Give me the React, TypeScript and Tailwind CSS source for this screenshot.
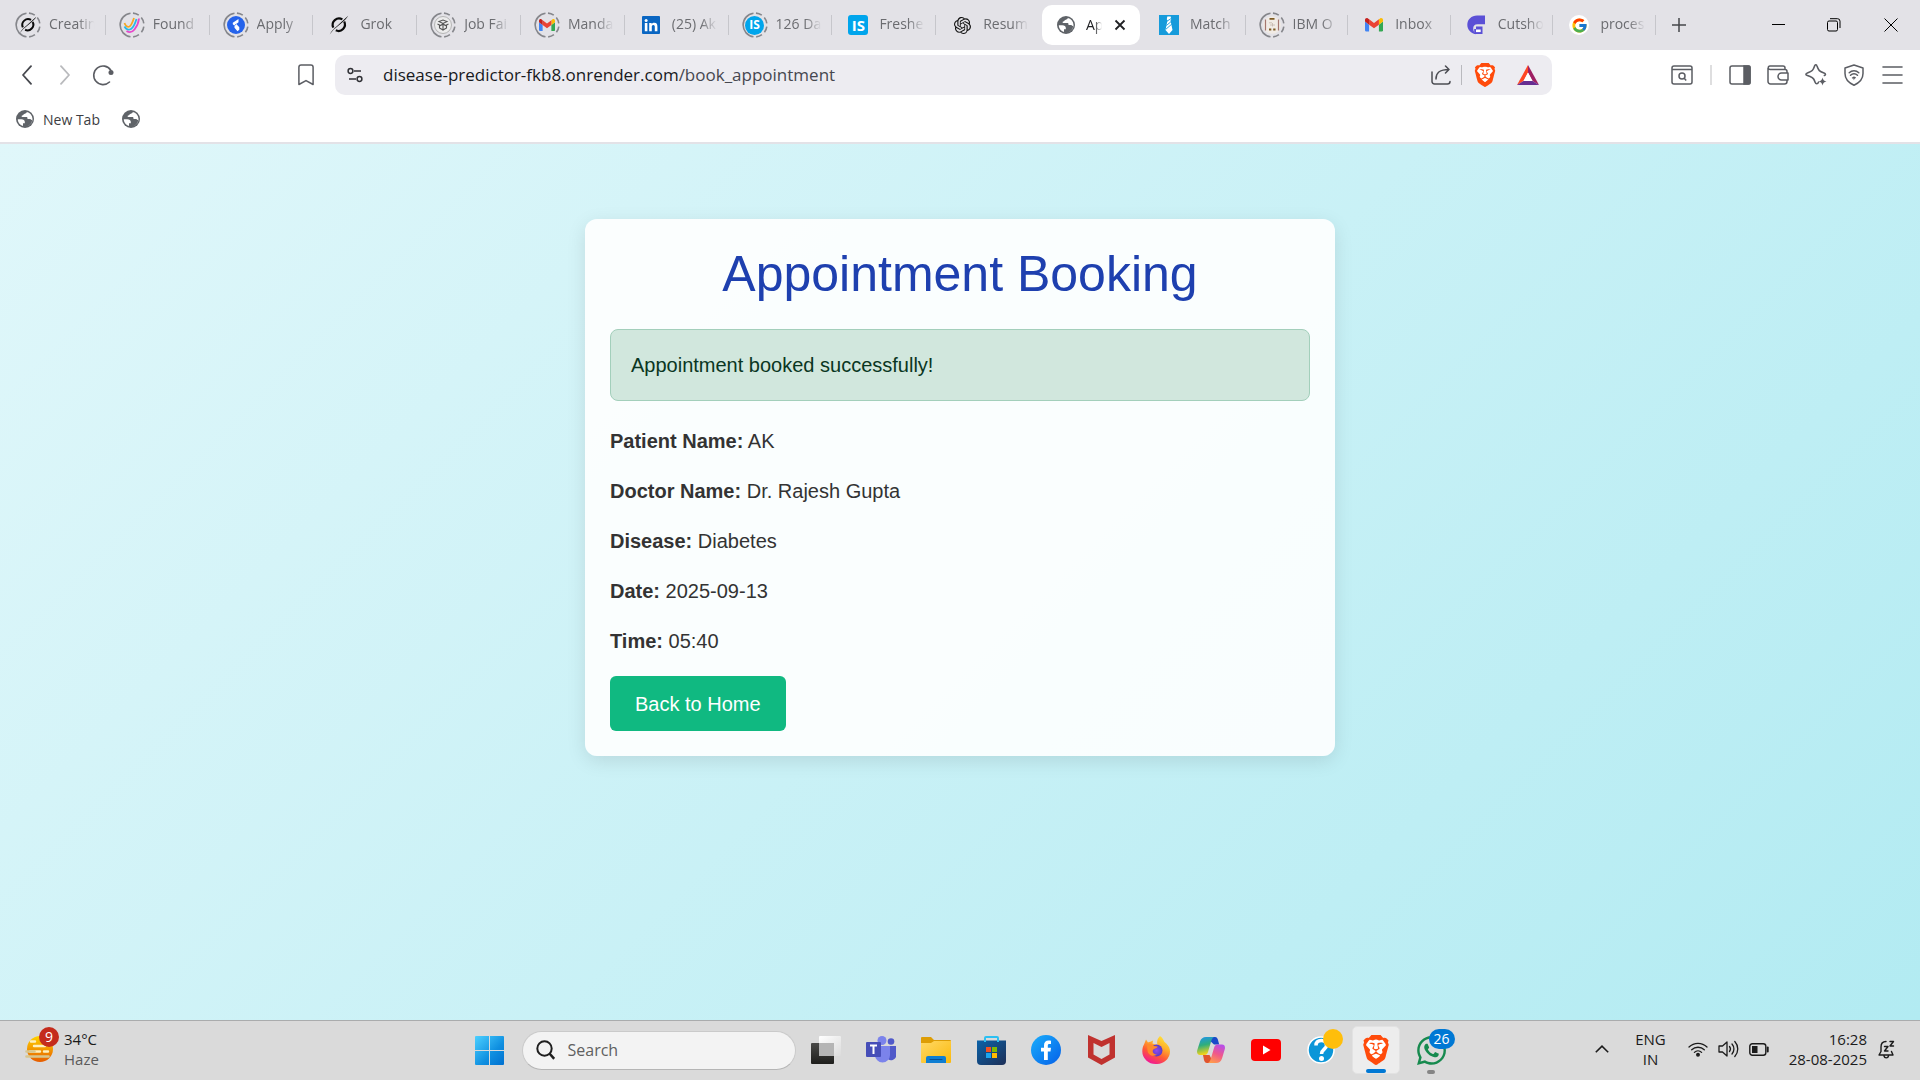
import type { ReactNode } from "react";
import { SiBrave, SiOpenai } from "react-icons/si";
import { FaWhatsapp } from "react-icons/fa";
import { FcGoogle } from "react-icons/fc";

function Globe({ size = 18 }: { size?: number }) {
  return (
    <svg width={size} height={size} viewBox="0 0 18 18">
      <circle cx="9" cy="9" r="9" fill="#5f6368" />
      <path d="M1.8 9.2h3.6c2 0 3.4 1 3.4 2.6v1.5H7v2.6C4 15.2 1.8 12.400 1.800 9.200z" fill="#fff" />
      <path d="M10.800 2.100C10.600 3.500 9.700 3.600 8.300 3.900 7.200 4.200 7.400 5.400 6.200 5.500 5.400 5.600 5.300 7 6.300 7.100h4.500c.6 0 .7.900.7 1.900h2.500c1 0 1.300 1.200 2.100 1.100 0 2.400-1.500 4.400-3.400 5.200l-1.200.6c2.900-.8 5.200-3.600 5-7.200C16.200 5.400 13.900 2.800 10.800 2.100z" fill="#fff" />
    </svg>
  );
}

function Gmail({ w = 18 }: { w?: number }) {
  return (
    <svg width={w} height={w * 0.76} viewBox="0 0 24 18">
      <path fill="#4285f4" d="M1.636 18h3.819V8.727L0 4.636v11.728C0 17.268.732 18 1.636 18" />
      <path fill="#34a853" d="M18.545 18h3.819A1.636 1.636 0 0 0 24 16.364V4.636l-5.455 4.091" />
      <path fill="#fbbc04" d="M18.545 1.636v7.091L24 4.636V2.455c0-2.023-2.31-3.178-3.927-1.964" />
      <path fill="#ea4335" d="M5.455 8.727V1.636L12 6.545l6.545-4.909v7.091L12 13.636" />
      <path fill="#c5221f" d="M0 2.455v2.181l5.455 4.091V1.636L3.927.491C2.309-.723 0 .432 0 2.455" />
    </svg>
  );
}

function Grok({ size = 20 }: { size?: number }) {
  return (
    <svg width={size} height={size} viewBox="0 0 20 20" fill="none" stroke="#0a0a0a">
      <path d="M15.200 6.600a6.400 6.400 0 0 1-8.400 8.700M4.300 12.600A6.400 6.400 0 0 1 13.400 4.400" strokeWidth="2.200" />
      <path d="M.8 19.200C3 15.500 4.500 14 7.500 11.500L19.200.8C17.500 4 15.500 5.300 13.200 7.500L4.500 14.800z" fill="#0a0a0a" stroke="none" />
    </svg>
  );
}

function Ring({ children }: { children: ReactNode }) {
  return (
    <span className="relative flex size-[26px] items-center justify-center">
      <svg className="absolute inset-0" width="26" height="26" viewBox="0 0 26 26" fill="none" stroke="#85868b" strokeWidth="1.600">
        <path d="M11.500 1.200A11.900 11.900 0 0 0 11.500 24.800" />
        <path d="M13.500 1.100A11.900 11.900 0 0 1 24.900 13v.3A11.900 11.900 0 0 1 13.500 24.900" strokeDasharray="6.200 3.400" strokeDashoffset="-.5" />
      </svg>
      {children}
    </span>
  );
}

function InternMark({ round }: { round?: boolean }) {
  return (
    <span
      className={
        round
          ? "flex size-[19px] items-center justify-center rounded-full bg-[#00a5ec] text-[12px] leading-none font-bold text-white"
          : "flex size-5 items-center justify-center rounded-[3px] bg-[#00a5ec] text-[15px] leading-none font-bold text-white"
      }
    >
      IS
    </span>
  );
}

function Swooshes() {
  return (
    <svg width="18" height="18" viewBox="0 0 18 18" fill="none" strokeWidth="1.800">
      <path d="M1.500 7c1 3 3 4.500 5 3.500S9.500 6.500 11 2" stroke="#f6a623" />
      <path d="M1.500 10.500c1.500 3 4 4 6.500 2.500s4-5 5.500-10" stroke="#28b8e8" />
      <path d="M3.500 15c3 2 6 1 8-1.500s4-6 4.500-11" stroke="#e748c9" />
    </svg>
  );
}

function ApplyMark() {
  return (
    <svg width="18" height="18" viewBox="0 0 18 18">
      <circle cx="9" cy="9" r="9" fill="#2563eb" />
      <path d="M11.500 3v3.200L9.300 8l3 3.200v2.600l-1.800 1.400-3-3.400V9.700L5.800 8.200V6.800z" fill="#fff" />
      <path d="M7.300 9.700 9.300 8" stroke="#2563eb" strokeWidth=".8" />
    </svg>
  );
}

function Medal() {
  return (
    <svg width="18" height="18" viewBox="0 0 18 18" fill="none" stroke="#555" strokeWidth="1.100">
      <circle cx="9" cy="9" r="8.500" fill="#ececec" stroke="#b5b5b5" strokeWidth="1" />
      <path d="M5 5.500 9 4l4 1.500L9 7.500zM3.500 8l3 1.500L9 8l2.500 1.500 3-1.500M9 8v6.500M5.500 9.500V12L9 14l3.500-2V9.500" />
    </svg>
  );
}

function LinkedIn() {
  return (
    <svg width="18" height="18" viewBox="0 0 18 18" fill="#fff">
      <rect width="18" height="18" rx="1" fill="#0a66c2" />
      <circle cx="4.100" cy="4.400" r="1.500" />
      <path d="M2.800 7h2.600v8.200H2.800zM7.200 7h2.500v1.200C10.200 7.300 11.200 6.800 12.300 6.800c2.500 0 3.100 1.600 3.100 3.900v4.500h-2.600v-4.200c0-1-.2-2-1.500-2s-1.500 1-1.500 2v4.200H7.200z" />
    </svg>
  );
}

function Tie() {
  return (
    <svg width="20" height="20" viewBox="0 0 20 20">
      <rect width="20" height="20" fill="#169bdb" />
      <path d="M8.300 1.500h3.400l.5 2.800-.7 1.200 2 9.500-3.500 4-3.500-4 2-9.500-.7-1.200z" fill="#fff" />
      <path d="M8 6.200 12 3.600M7.400 10.500l4.800-4M6.800 14.300l6-5.200" stroke="#169bdb" strokeWidth=".9" />
    </svg>
  );
}

function Certificate() {
  return (
    <svg width="18" height="18" viewBox="0 0 18 18" fill="none">
      <circle cx="9" cy="9" r="8.800" fill="#f1ebe5" />
      <path d="M2.500 3.500v11M15.500 3.500v11" stroke="#a5766e" strokeWidth="1.200" />
      <path d="M6 6.800h3M7 9h5M9.500 7v3.500" stroke="#c4b5ab" strokeWidth=".8" />
      <path d="M6.500 2.800h5M6 13.500h2.300M10.200 13.500h2.300" stroke="#7d5b23" strokeWidth="1.800" />
    </svg>
  );
}

function Cutshort() {
  return (
    <svg width="19" height="20" viewBox="0 0 19 20" fill="#5b50d6">
      <path d="M10 .5h8v8.800h-7.500c-3 0-4.300 1.800-4.300 4s1 4.600 2.600 6C3.500 18.300.3 14.300.3 9.800.3 4.500 4.500.5 10 .5z" />
      <path d="M9 11.500h6.500V19H7.200v-5h1.800z" />
      <path d="M9 14.500h4.700v2.600H9z" fill="#fff" />
    </svg>
  );
}

type Tab = { label: string; icon: ReactNode };

const leftTabs: Tab[] = [
  { label: "Creatin", icon: <Ring><Grok size={18} /></Ring> },
  { label: "Found", icon: <Ring><Swooshes /></Ring> },
  { label: "Apply", icon: <Ring><ApplyMark /></Ring> },
  { label: "Grok", icon: <Grok /> },
  { label: "Job Fai", icon: <Ring><Medal /></Ring> },
  { label: "Manda", icon: <Ring><Gmail w={16} /></Ring> },
  { label: "(25) Ak", icon: <LinkedIn /> },
  { label: "126 Da", icon: <Ring><InternMark round /></Ring> },
  { label: "Freshe", icon: <InternMark /> },
  { label: "Resum", icon: <SiOpenai size={17} color="#111" /> },
];

const rightTabs: Tab[] = [
  { label: "Match", icon: <Tie /> },
  { label: "IBM O", icon: <Ring><Certificate /></Ring> },
  { label: "Inbox", icon: <Gmail /> },
  { label: "Cutsho", icon: <Cutshort /> },
  {
    label: "proces",
    icon: (
      <span className="flex size-5 items-center justify-center rounded-full bg-white">
        <FcGoogle size={17} />
      </span>
    ),
  },
];

function TabButton({ tab, separated }: { tab: Tab; separated: boolean }) {
  return (
    <button
      className={
        "flex h-5 min-w-0 flex-1 items-center border-r pl-[13px] " +
        (separated ? "border-[#c6c6cb]" : "border-transparent")
      }
    >
      <span className="flex w-[26px] shrink-0 items-center justify-center">{tab.icon}</span>
      <span className="ml-2 w-[48px] pb-0.5 text-left text-[14px] leading-5 whitespace-nowrap text-[#6b6c70] [mask-image:linear-gradient(to_right,black_60%,transparent_95%)]">
        {tab.label}
      </span>
    </button>
  );
}

function TabStrip() {
  return (
    <header className="flex h-[50px] items-center bg-[#e3e2e7] pl-0.5">
      <nav className="flex min-w-0 items-center" aria-label="Open tabs">
        <div className="flex w-[1038px] min-w-0 items-center">
          {leftTabs.map((tab, i) => (
            <TabButton key={tab.label} tab={tab} separated={i < leftTabs.length - 1} />
          ))}
        </div>
        <div className="mr-[3px] ml-0.5 flex h-10 w-[98px] shrink-0 items-center rounded-[10px] bg-white pr-[10px] pl-[15px]">
          <Globe />
          <span className="ml-[11px] w-5 pb-0.5 text-[14px] whitespace-nowrap text-[#202124] [mask-image:linear-gradient(to_right,black_40%,transparent_80%)]">
            Ap
          </span>
          <button aria-label="Close tab" className="ml-auto flex size-5 items-center justify-center">
            <svg width="12" height="12" viewBox="0 0 12 12" stroke="#202124" strokeWidth="1.800">
              <path d="M1.500 1.500l9 9M10.500 1.500l-9 9" />
            </svg>
          </button>
        </div>
        <div className="flex w-[513px] min-w-0 items-center">
          {rightTabs.map((tab) => (
            <TabButton key={tab.label} tab={tab} separated />
          ))}
        </div>
      </nav>
      <button aria-label="New tab" className="ml-[9px] flex size-7 items-center justify-center">
        <svg width="14" height="14" viewBox="0 0 14 14" stroke="#46474b" strokeWidth="1.500">
          <path d="M7 0v14M0 7h14" />
        </svg>
      </button>
      <div className="ml-auto flex shrink-0">
        <button aria-label="Minimize" className="flex h-10 w-14 items-center justify-center">
          <svg width="13" height="13" stroke="#000" fill="none"><path d="M0 5.500h13" /></svg>
        </button>
        <button aria-label="Restore" className="flex h-10 w-14 items-center justify-center">
          <svg width="14" height="14" stroke="#000" fill="none">
            <rect x=".5" y="3" width="10" height="10" rx="1.500" />
            <path d="M3 .7h7.500a2.500 2.500 0 0 1 2.500 2.500V10" />
          </svg>
        </button>
        <button aria-label="Close" className="flex h-10 w-[58px] items-center justify-center">
          <svg width="14" height="14" stroke="#000" fill="none"><path d="M.5.5l13 13M13.500.5l-13 13" /></svg>
        </button>
      </div>
    </header>
  );
}

function IconButton({ label, children }: { label: string; children: ReactNode }) {
  return (
    <button aria-label={label} className="flex h-8 w-[38px] shrink-0 items-center justify-center">
      {children}
    </button>
  );
}

function BraveLion({ size }: { size: number }) {
  return (
    <span className="relative inline-flex">
      <svg className="absolute inset-0" width={size} height={size} viewBox="0 0 24 24">
        <path d="M6 4h12l2 4-3 10-5 4-5-4L4 8z" fill="#fff" />
      </svg>
      <SiBrave className="relative" size={size} color="#ff4b0b" />
    </span>
  );
}

function Toolbar() {
  return (
    <div className="flex h-[50px] items-center bg-white">
      <div className="flex w-[335px] shrink-0 items-center pr-[10px] pl-2">
        <IconButton label="Back">
          <svg width="12" height="20" viewBox="0 0 12 20" fill="none" stroke="#46484e" strokeWidth="1.800" strokeLinecap="round" strokeLinejoin="round">
            <path d="M10 1.200 2 10l8 8.800" />
          </svg>
        </IconButton>
        <IconButton label="Forward">
          <svg width="12" height="20" viewBox="0 0 12 20" fill="none" stroke="#b9babd" strokeWidth="1.800" strokeLinecap="round" strokeLinejoin="round">
            <path d="M2 1.200 10 10l-8 8.800" />
          </svg>
        </IconButton>
        <IconButton label="Reload">
          <svg width="22" height="22" viewBox="0 0 22 22" fill="none" stroke="#5b5d63" strokeWidth="1.600" strokeLinecap="round">
            <path d="M17.500 18A9.300 9.300 0 1 1 18.800 6.200" />
            <circle cx="19" cy="8.500" r="2.500" fill="#5b5d63" stroke="none" />
          </svg>
        </IconButton>
        <div className="ml-auto">
          <IconButton label="Bookmark this page">
            <svg width="16" height="22" viewBox="0 0 16 22" fill="none" stroke="#5b5d63" strokeWidth="1.500" strokeLinejoin="round">
              <path d="M.9 3.200A2.200 2.200 0 0 1 3.100 1h9.800a2.200 2.200 0 0 1 2.200 2.200v17.300L8 16.600.9 20.500z" />
            </svg>
          </IconButton>
        </div>
      </div>
      <div className="flex h-10 min-w-0 flex-1 items-center rounded-[10px] bg-[#edecf1] pr-[13px] pl-[12px]">
        <button aria-label="Site information" className="flex w-4 shrink-0 items-center justify-center">
          <svg className="shrink-0" width="16" height="16" viewBox="0 0 16 16" fill="none" stroke="#303136" strokeWidth="1.500">
            <circle cx="3.500" cy="4" r="2.400" /><path d="M7 4h7" />
            <circle cx="12.500" cy="12" r="2.400" /><path d="M9 12H2" />
          </svg>
        </button>
        <a href="#address" className="ml-5 min-w-0 flex-1 truncate pb-px text-[17px] text-[#46474f]">
          <span className="text-[#18191d]">disease-predictor-fkb8.onrender.com</span>/book_appointment
        </a>
        <button aria-label="Share" className="px-[10px]">
          <svg width="20" height="20" viewBox="0 0 20 20" fill="none" stroke="#4c4d53" strokeWidth="1.500" strokeLinecap="round" strokeLinejoin="round">
            <path d="M1 7v9.500A2.500 2.500 0 0 0 3.500 19h13a2.500 2.500 0 0 0 2.500-2.500M5 14c0-6 3-9.500 13-9.500M14.500 1 18 4.500 14.500 8" />
          </svg>
        </button>
        <span className="h-5 w-px bg-[#b9b9be]" />
        <button aria-label="Brave Shields" className="ml-[11px] flex"><BraveLion size={24} /></button>
        <button aria-label="Brave Rewards" className="ml-5 flex">
          <svg width="22" height="20" viewBox="0 0 22 20">
            <path d="M11 0 0 20l6.500-4L11 7.500z" fill="#ff4724" />
            <path d="M11 0 22 20l-6.500-4L11 7.500z" fill="#9e1f63" />
            <path d="M0 20h22l-6.500-4h-9z" fill="#662d91" />
            <path d="M11 7.500 15.500 16h-9z" fill="#fff" />
          </svg>
        </button>
      </div>
      <div className="flex w-[368px] shrink-0 items-center justify-end pr-[9px]">
        <IconButton label="Search tabs">
          <svg width="22" height="20" viewBox="0 0 22 20" fill="none" stroke="#5b5d63" strokeWidth="1.500">
            <rect x="1" y="1" width="20" height="18" rx="2" /><path d="M1 4.500h20" />
            <circle cx="11" cy="11" r="3" /><path d="m13 13 2.200 2.500" />
          </svg>
        </IconButton>
        <span className="mx-[9px] h-5 w-0.5 bg-[#dededf]" />
        <IconButton label="Side panel">
          <svg width="22" height="20" viewBox="0 0 22 20" fill="none" stroke="#5b5d63" strokeWidth="1.500">
            <rect x="1" y="1" width="20" height="18" rx="2" /><path d="M15 1h5a1 1 0 0 1 1 1v16a1 1 0 0 1-1 1h-5z" fill="#5b5d63" />
          </svg>
        </IconButton>
        <IconButton label="Wallet">
          <svg width="22" height="20" viewBox="0 0 22 20" fill="none" stroke="#5b5d63" strokeWidth="1.500" strokeLinejoin="round">
            <path d="M1 3v13.500A2.500 2.500 0 0 0 3.500 19h14a2.500 2.500 0 0 0 2.500-2.500V15M20 8V6.500a2 2 0 0 0-2-2H3A1.700 1.700 0 0 1 3 1h13a2 2 0 0 1 2 2v1.500M21 8h-6.500a3.500 3.500 0 0 0 0 7H21z" />
          </svg>
        </IconButton>
        <IconButton label="Leo AI">
          <svg width="22" height="22" viewBox="0 0 22 22" fill="none" stroke="#5b5d63" strokeWidth="1.600" strokeLinejoin="round" strokeLinecap="round">
            <path d="M13.500 18.200c-.8 2-2.700 2-3.400 0-1-3-1.500-4-5-5.600l-2.700-1c-2-.7-2-2 0-2.700 5-1.700 5.500-2.300 7.200-7C10.200.4 11.500.4 12 2c1.600 4.600 2.300 5.300 7 7 1.800.7 1.900 1.900.4 2.500" />
            <path d="M17.500 13.500c.5 2.500 1.500 3.500 4 4-2.500.5-3.500 1.500-4 4-.5-2.500-1.500-3.500-4-4 2.500-.5 3.500-1.500 4-4z" fill="#5b5d63" stroke="none" />
          </svg>
        </IconButton>
        <IconButton label="VPN">
          <svg width="20" height="22" viewBox="0 0 20 22" fill="none" stroke="#5b5d63" strokeWidth="1.500" strokeLinejoin="round" strokeLinecap="round">
            <path d="M10 1 19 4v5.500c0 5-3 9-9 11.700C4 18.500 1 14.500 1 9.500V4z" />
            <path d="M5.200 8.700a7 7 0 0 1 9.600 0M6.500 11.300a5 5 0 0 1 7 0" />
            <path d="M8.200 13.600a2.600 2.600 0 0 1 3.600 0L10 15.300z" fill="#5b5d63" strokeWidth=".5" />
          </svg>
        </IconButton>
        <IconButton label="Menu">
          <svg width="21" height="18" viewBox="0 0 21 18" stroke="#5b5d63" strokeWidth="1.600" strokeLinecap="round">
            <path d="M1 1h19M1 9h19M1 17h19" />
          </svg>
        </IconButton>
      </div>
    </div>
  );
}

function BookmarksBar() {
  return (
    <div className="flex h-[44px] items-center gap-[22px] border-b-2 border-[#e3e2e7] bg-white pb-1 pl-4 text-[14px] text-[#3c3d42]">
      <a href="#new-tab" className="flex items-center gap-[9px]"><Globe /> New Tab</a>
      <a href="#bookmark" aria-label="Bookmark" className="flex"><Globe /></a>
    </div>
  );
}

const details = [
  ["Patient Name:", "AK"],
  ["Doctor Name:", "Dr. Rajesh Gupta"],
  ["Disease:", "Diabetes"],
  ["Date:", "2025-09-13"],
  ["Time:", "05:40"],
];

function BookingPage() {
  return (
    <main className="flex-1 bg-linear-135 from-[#e0f7fa] to-[#b2ebf2] px-4 pt-[75px] pb-10 font-['Liberation_Sans',Arial,sans-serif] text-[20px] leading-[30px] text-[#333]">
      <section className="mx-auto w-full max-w-[750px] rounded-[12px] bg-white/90 p-[25px] shadow-[0_5px_19px_rgba(0,0,0,0.1)]">
        <h1 className="text-center text-[50px] leading-[60px] text-[#1e40af]">Appointment Booking</h1>
        <div role="alert" className="mt-[25px] mb-[25px] rounded-[8px] border border-[#a3cfbb] bg-[#d1e7dd] p-5 text-[#0a3622]">
          Appointment booked successfully!
        </div>
        {details.map(([label, value]) => (
          <p key={label} className="mb-5"><strong>{label}</strong> {value}</p>
        ))}
        <a href="#home" className="inline-block rounded-[6px] bg-[#10b981] px-[25px] pt-[13px] pb-[12px] align-top text-white">
          Back to Home
        </a>
      </section>
    </main>
  );
}

function Cell({ label, children }: { label: string; children: ReactNode }) {
  return (
    <button aria-label={label} className="relative flex h-[58px] w-[55px] items-center justify-center">
      {children}
    </button>
  );
}

function Taskbar() {
  return (
    <footer className="grid h-[60px] grid-cols-[1fr_auto_1fr] items-start border-t border-[#aaacad] bg-[#dadada] text-[15px] leading-5 text-[#1b1b1b]">
      <button className="flex h-[56px] items-center gap-[10px] pl-6 text-left">
        <span className="relative">
          <svg width="30" height="28" viewBox="0 0 30 28">
            <defs>
              <linearGradient id="sun" x1="0" y1="0" x2="0" y2="1"><stop stopColor="#ffd400" /><stop offset="1" stopColor="#e65c00" /></linearGradient>
            </defs>
            <circle cx="16" cy="14" r="13" fill="url(#sun)" />
            <g strokeLinecap="round" fill="none">
              <path d="M7 6.500h4M10 11h11M6 16.500h10M20 16.500h4" stroke="#fdf0c0" strokeWidth="2.400" />
              <path d="M2.500 16.500h8M2.500 21.500h22" stroke="#d8c68e" strokeWidth="2.600" />
            </g>
          </svg>
          <span className="absolute -top-2 left-[15px] flex size-5 items-center justify-center rounded-full bg-[#c42b1c] text-[14px] text-white">9</span>
        </span>
        <span>
          <span className="block">34°C</span>
          <span className="block text-[#5a5a5a]">Haze</span>
        </span>
      </button>

      <div className="flex items-center">
        <Cell label="Start">
          <svg width="29" height="29" viewBox="0 0 29 29">
            <defs><linearGradient id="win" x1="0" y1="0" x2="1" y2="1"><stop stopColor="#4cd0ff" /><stop offset=".6" stopColor="#0f8fe0" /><stop offset="1" stopColor="#0070d0" /></linearGradient></defs>
            <path fill="url(#win)" d="M1 0h13v14H0V1a1 1 0 0 1 1-1zM15 0h13a1 1 0 0 1 1 1v13H15zM0 15h14v14H1a1 1 0 0 1-1-1zM15 15h14v13a1 1 0 0 1-1 1H15z" />
          </svg>
        </Cell>
        <label className="mr-[3px] ml-[5px] flex h-[39px] w-[274px] items-center gap-[13px] rounded-full border border-[#cacaca] border-b-[#b5b5b5] bg-[#f3f3f3] pl-[13px]">
          <svg className="shrink-0" width="19" height="20" viewBox="0 0 19 20" fill="none" stroke="#1f1f1f" strokeWidth="2">
            <circle cx="8.500" cy="8.500" r="7.200" /><path d="m13.500 13.500 4.700 5.300" strokeWidth="2.500" />
          </svg>
          <input type="text" aria-label="Search" placeholder="Search" className="w-40 bg-transparent text-[16px] outline-none placeholder:text-[#606060]" />
        </label>
        <Cell label="Task view">
          <svg width="30" height="28" viewBox="0 0 30 28">
            <defs>
              <linearGradient id="tv1" x1="0" y1="0" x2="0" y2="1"><stop stopColor="#4a4a48" /><stop offset="1" stopColor="#1e1e1c" /></linearGradient>
              <linearGradient id="tv2" x1="0" y1="0" x2="1" y2="1"><stop stopColor="#fff" /><stop offset="1" stopColor="#dcdcdc" /></linearGradient>
            </defs>
            <rect y="7" width="23" height="21" rx="1" fill="url(#tv1)" />
            <rect x="8" width="22" height="20" rx="1" fill="url(#tv2)" />
            <rect x="8" y="7" width="15" height="13" fill="#b5b5b5" />
          </svg>
        </Cell>
        <Cell label="Teams">
          <svg width="30" height="28" viewBox="0 0 30 28">
            <circle cx="25" cy="5.500" r="3.300" fill="#5059c9" /><path d="M21 10h9v8a5 5 0 0 1-9 4z" fill="#5059c9" />
            <circle cx="16" cy="4.500" r="4.500" fill="#7b83eb" /><path d="M9 10h15v9a7.500 7.500 0 0 1-15 0z" fill="#7b83eb" />
            <rect y="6" width="15" height="15" rx="1" fill="#464eb8" />
            <path d="M4 9.500h7M7.500 9.500v8.500" stroke="#fff" strokeWidth="2" />
          </svg>
        </Cell>
        <Cell label="File Explorer">
          <svg width="30" height="27" viewBox="0 0 30 27">
            <defs><linearGradient id="fold" x1="0" y1="0" x2="1" y2="1"><stop stopColor="#ffd966" /><stop offset="1" stopColor="#fbb90c" /></linearGradient></defs>
            <path d="M0 1a1 1 0 0 1 1-1h9l3 3h16a1 1 0 0 1 1 1v5H0z" fill="#dd9d05" />
            <path d="M0 6h10l3-2h17v21a1 1 0 0 1-1 1H1a1 1 0 0 1-1-1z" fill="url(#fold)" />
            <path d="M5 26v-5a2 2 0 0 1 2-2h16a2 2 0 0 1 2 2v5z" fill="#0f7ed2" />
            <path d="M9 22.500h12" stroke="#0a4f94" strokeLinecap="round" />
          </svg>
        </Cell>
        <Cell label="Microsoft Store">
          <svg width="29" height="29" viewBox="0 0 29 29">
            <defs><linearGradient id="store" x1="0" y1="0" x2="1" y2="1"><stop stopColor="#0b62a8" /><stop offset="1" stopColor="#1d2f57" /></linearGradient></defs>
            <path d="M8 6V2a1 1 0 0 1 1-1h11a1 1 0 0 1 1 1v4" fill="none" stroke="#2cc0f2" strokeWidth="2" />
            <path d="M0 4.500h29V25a4 4 0 0 1-4 4H4a4 4 0 0 1-4-4z" fill="url(#store)" />
            <path d="M8 4v2M21 4v2" stroke="#2cc0f2" strokeWidth="2" />
            <path d="M9 11h5v5H9z" fill="#f25022" /><path d="M15 11h5v5h-5z" fill="#7fba00" />
            <path d="M9 17h5v5H9z" fill="#1ba5ee" /><path d="M15 17h5v5h-5z" fill="#ffb900" />
          </svg>
        </Cell>
        <Cell label="Facebook">
          <svg width="30" height="30" viewBox="0 0 30 30">
            <defs><linearGradient id="fb" x1="0" y1="0" x2="1" y2="1"><stop stopColor="#1aaefc" /><stop offset="1" stopColor="#0560e8" /></linearGradient></defs>
            <circle cx="15" cy="15" r="15" fill="url(#fb)" />
            <path d="M13 25v-8.500h-3v-3.800h3v-2.200c0-3.500 1.800-5 4.600-5 1 0 1.800.1 2.400.2v3.200h-1.600c-1.200 0-1.600.7-1.600 1.700v2.100h3.200l-.5 3.800h-2.700V25z" fill="#fff" />
          </svg>
        </Cell>
        <Cell label="McAfee">
          <svg width="27" height="30" viewBox="0 0 27 30">
            <path d="M0 0 13.500 6 27 0v22.500L13.500 30 0 22.500zM5.500 8v11.500l8 4.500 8-4.500V8l-8 4z" fill="#c0322f" fillRule="evenodd" />
          </svg>
        </Cell>
        <Cell label="Firefox">
          <svg width="28" height="28" viewBox="0 0 28 28">
            <defs>
              <linearGradient id="ff" x1=".8" y1="0" x2=".3" y2="1"><stop stopColor="#ffe83a" /><stop offset=".35" stopColor="#ffb02a" /><stop offset=".65" stopColor="#ff5b34" /><stop offset="1" stopColor="#f0159a" /></linearGradient>
              <radialGradient id="ffc"><stop stopColor="#8f4bf0" /><stop offset="1" stopColor="#5b3bc4" /></radialGradient>
            </defs>
            <path d="M18 0c3 2 3.500 4.500 4.500 6l1.800 1.500c2.500 2.500 3.700 5 3.700 8A13.500 12.500 0 0 1 14 28 13.500 12.500 0 0 1 .3 15.500c0-3 .5-5 1.700-7L4 3.500l2 3c1.500-.8 3-.5 5-2l-.5 3 5 1.500C14.500 5 15.500 2.500 18 0z" fill="url(#ff)" />
            <circle cx="14.500" cy="14.500" r="6" fill="url(#ffc)" />
            <path d="M5 8.500c4-1 6 .3 7 1.500l3.500.5c0 2-3 1.500-4.500 3.500-1 2 .5 4.500 4 4.500-4 3-9 .5-9.500-4z" fill="#ff8a2b" />
          </svg>
        </Cell>
        <Cell label="Copilot">
          <svg width="28" height="26" viewBox="0 0 28 26">
            <defs>
              <linearGradient id="cp1" x1="0" y1="0" x2=".2" y2="1"><stop stopColor="#1f93ee" /><stop offset=".5" stopColor="#2fae7c" /><stop offset="1" stopColor="#f3d318" /></linearGradient>
              <linearGradient id="cp2" x1=".7" y1="0" x2=".3" y2="1"><stop stopColor="#b84ee8" /><stop offset=".5" stopColor="#f0588a" /><stop offset="1" stopColor="#ff9a4d" /></linearGradient>
            </defs>
            <path d="M9 0h9c2 0 2.500 1.500 3 3l1.200 4.500H17z" fill="#1a49c9" />
            <path d="M9 0h8c-2 1-2.500 3-3.200 5.500L11 15c-.6 2-1.500 3-3.500 3H3c-2.500 0-3.500-2-2.700-5L3 4.500C4 1.500 6 0 9 0z" fill="url(#cp1)" />
            <path d="M6 18h6.500l4 7.900H10c-2 0-2.500-1.500-3-3z" fill="#e0542e" />
            <path d="M19 26h-8c2-1 2.500-3 3.200-5.500L17 11c.6-2 1.500-3.500 3.500-3.500H25c2.500 0 3.500 2 2.700 5L25 21.500c-1 3-3 4.500-6 4.500z" fill="url(#cp2)" />
          </svg>
        </Cell>
        <Cell label="YouTube">
          <svg width="30" height="22" viewBox="0 0 30 22">
            <rect width="30" height="22" rx="4" fill="#f00" /><path d="m12 6.500 7.500 4.500-7.500 4.500z" fill="#fff" />
          </svg>
        </Cell>
        <Cell label="Get Help">
          <svg width="28" height="28" viewBox="0 0 28 28">
            <circle cx="14" cy="14" r="13" fill="#0b96d8" stroke="#fff" strokeWidth="1.500" />
            <path d="M9 9.500C9 6 11.500 4.500 14.500 4.500S19.500 6.500 19.500 9.500c0 3.500-5 4-5 8.500" fill="none" stroke="#fff" strokeWidth="3.500" /><circle cx="14.500" cy="22.500" r="2.500" fill="#fff" />
          </svg>
          <span className="absolute top-[8px] right-1.5 size-5 rounded-full bg-[#ffbe0b]" />
        </Cell>
        <Cell label="Brave">
          <span className="relative flex size-12 items-center justify-center rounded-[5px] border border-[#e2e2e2] bg-[#ededed]">
            <BraveLion size={30} />
            <span className="absolute bottom-0 h-1 w-5 rounded-full bg-[#0078d4]" />
          </span>
        </Cell>
        <Cell label="WhatsApp">
          <FaWhatsapp size={33} color="#168a4e" />
          <span className="absolute top-[8px] left-[25px] flex h-5 w-[26px] items-center justify-center rounded-full bg-[#0078d4] text-[14px] text-white">26</span>
          <span className="absolute bottom-[5px] h-1 w-2 rounded-full bg-[#858585]" />
        </Cell>
      </div>

      <div className="flex h-[56px] items-center justify-end pr-[25px]">
        <button aria-label="Show hidden icons" className="mr-[26px]">
          <svg width="14" height="8" fill="none" stroke="#1b1b1b" strokeWidth="1.600"><path d="m.8 7.200 6.200-6 6.200 6" /></svg>
        </button>
        <button className="mr-[22px] text-center"><span className="block">ENG</span><span className="block">IN</span></button>
        <button aria-label="Network, volume, battery" className="mr-5 flex items-center gap-[10px]">
          <svg width="20" height="16" viewBox="0 0 20 16" fill="none" stroke="#1b1b1b" strokeWidth="1.300" strokeLinecap="round">
            <path d="M1 6a12.800 12.800 0 0 1 18 0M3.700 8.800a9 9 0 0 1 12.600 0M6.400 11.400a5.200 5.200 0 0 1 7.200 0" /><circle cx="10" cy="13.800" r="1.300" fill="#1b1b1b" />
          </svg>
          <svg width="21" height="18" viewBox="0 0 21 18" fill="none" stroke="#1b1b1b" strokeWidth="1.300" strokeLinejoin="round" strokeLinecap="round">
            <path d="M1 6h3.500L9 2v14l-4.500-4H1zM11.500 6.500a4 4 0 0 1 0 5M14 4a7.500 7.500 0 0 1 0 10M16.800 1.500a11 11 0 0 1 0 15" />
          </svg>
          <svg width="20" height="13" viewBox="0 0 20 13" fill="none" stroke="#1b1b1b" strokeWidth="1.400">
            <rect x=".8" y=".8" width="16" height="11.400" rx="2.500" /><rect x="3" y="3" width="5.500" height="7" fill="#1b1b1b" stroke="none" /><path d="M18.700 4.500v4" strokeWidth="2" strokeLinecap="round" />
          </svg>
        </button>
        <button className="mr-[11px] text-right"><span className="block">16:28</span><span className="block whitespace-nowrap">28-08-2025</span></button>
        <button aria-label="Notifications">
          <svg width="17" height="19" viewBox="0 0 17 19" fill="none" stroke="#1b1b1b" strokeWidth="1.400" strokeLinecap="round" strokeLinejoin="round">
            <path d="M8 1.500C4.500 1.500 3 4 3 7v4.500l-2 3.500h14l-1.500-3.500M6 16c.5 2.500 4 2.500 4.500 0" />
            <path d="M6.500 6.500h3.500l-3.500 4.500H10M12 1.500h3.500L12 6h3.500" />
          </svg>
        </button>
      </div>
    </footer>
  );
}

export default function App() {
  return (
    <div className="flex min-h-screen flex-col font-['Open_Sans','Segoe_UI',sans-serif]">
      <TabStrip />
      <Toolbar />
      <BookmarksBar />
      <BookingPage />
      <Taskbar />
    </div>
  );
}
